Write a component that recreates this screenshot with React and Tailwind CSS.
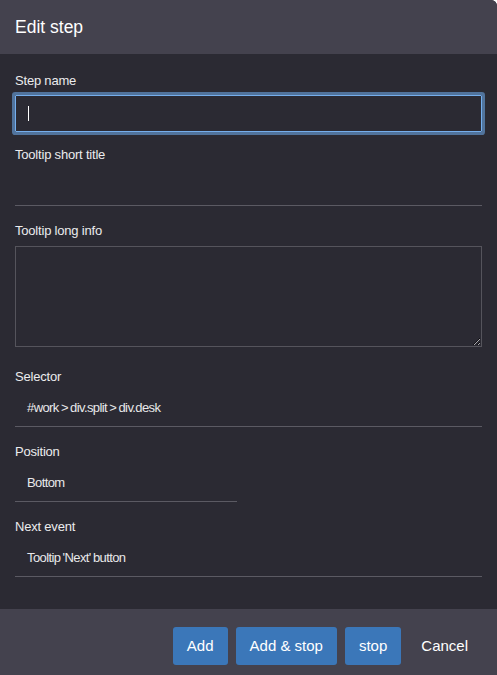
import React from "react";

function Label({ children }) {
  return (
    <div className="h-[18px] text-[13px] leading-[18px] text-[#ececee] tracking-[-0.2px]">
      {children}
    </div>
  );
}

function LineInput({ value, className = "", mt = "mt-[3px]" }) {
  return (
    <div
      className={`${mt} h-[38px] flex items-center pl-[12px] border-b border-[#5b5a63] text-[13px] text-[#e8e8ea] tracking-[-0.6px] [word-spacing:-0.8px] ${className}`}
    >
      {value}
    </div>
  );
}

export default function App() {
  return (
    <div
      className="w-[497px] h-[675px] flex flex-col bg-[#2b2a33] rounded-tr-[6px] overflow-hidden"
      style={{ fontFamily: '"Liberation Sans", Arial, sans-serif' }}
    >
      <div className="h-[54px] shrink-0 bg-[#44424e] flex items-center px-[15px] text-[17.5px] text-white">
        Edit step
      </div>

      <div className="flex-1 flex flex-col px-[15px] pt-[18px]">
        <Label>Step name</Label>
        <div className="mt-[5px] h-[37px] flex items-center pl-[12px] border border-[#75aeec] shadow-[0_0_0_3px_#51739c] rounded-[1px]">
          <div className="w-px h-[15px] bg-white" />
        </div>

        <div className="mt-[14px]">
          <Label>Tooltip short title</Label>
        </div>
        <LineInput value="" mt="mt-[4px]" />

        <div className="mt-[16px]">
          <Label>Tooltip long info</Label>
        </div>
        <textarea
          readOnly
          className="mt-[6px] h-[101px] w-full block border border-[#55545c] bg-transparent outline-none [color-scheme:dark]"
        />

        <div className="mt-[21px]">
          <Label>Selector</Label>
        </div>
        <LineInput value="#work > div.split > div.desk" />

        <div className="mt-[16px]">
          <Label>Position</Label>
        </div>
        <LineInput value="Bottom" className="w-[222px]" />

        <div className="mt-[16px]">
          <Label>Next event</Label>
        </div>
        <LineInput value="Tooltip 'Next' button" />
      </div>

      <div className="h-[66px] shrink-0 bg-[#44424e] flex items-start justify-end gap-2 pt-[18px] pr-[17px] text-[15px]">
        <button className="h-[38px] px-[14px] rounded-[3px] bg-[#3b77b9] text-white">Add</button>
        <button className="h-[38px] px-[14px] rounded-[3px] bg-[#3b77b9] text-white">Add &amp; stop</button>
        <button className="h-[38px] px-[14px] rounded-[3px] bg-[#3b77b9] text-white">stop</button>
        <button className="h-[38px] px-[12px] rounded-[3px] text-white">Cancel</button>
      </div>
    </div>
  );
}
